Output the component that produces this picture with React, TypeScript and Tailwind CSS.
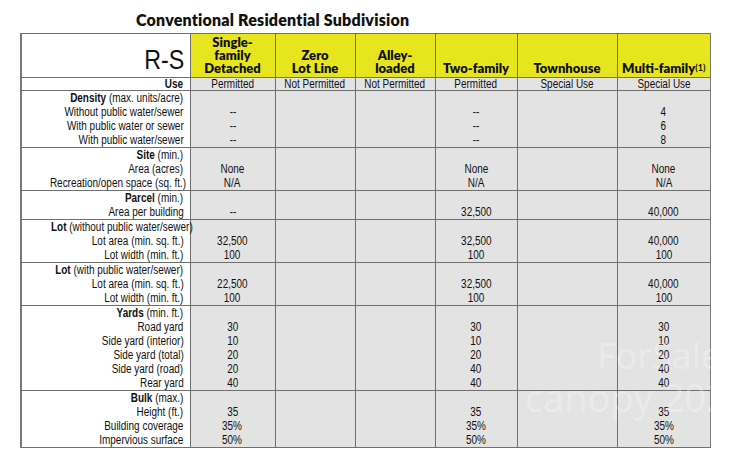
import React from "react";

type Line = { b?: string; t?: string };
type Section = { h: string; label: Line[]; cols: string[][] };

// column order: single, zero, alley, two, town, multi
const sections: Section[] = [
  {
    h: "h-[56px]",
    label: [
      { b: "Density", t: " (max. units/acre)" },
      { t: "Without public water/sewer" },
      { t: "With public water or sewer" },
      { t: "With public water/sewer" },
    ],
    cols: [["", "--", "--", "--"], [], [], ["", "--", "--", "--"], [], ["", "4", "6", "8"]],
  },
  {
    h: "h-[43px]",
    label: [{ b: "Site", t: " (min.)" }, { t: "Area (acres)" }, { t: "Recreation/open space (sq. ft.)" }],
    cols: [["", "None", "N/A"], [], [], ["", "None", "N/A"], [], ["", "None", "N/A"]],
  },
  {
    h: "h-[28px]",
    label: [{ b: "Parcel", t: " (min.)" }, { t: "Area per building" }],
    cols: [["", "--"], [], [], ["", "32,500"], [], ["", "40,000"]],
  },
  {
    h: "h-[43px]",
    label: [
      { b: "Lot", t: " (without public water/sewer)" },
      { t: "Lot area (min. sq. ft.)" },
      { t: "Lot width (min. ft.)" },
    ],
    cols: [["", "32,500", "100"], [], [], ["", "32,500", "100"], [], ["", "40,000", "100"]],
  },
  {
    h: "h-[42px]",
    label: [
      { b: "Lot", t: " (with public water/sewer)" },
      { t: "Lot area (min. sq. ft.)" },
      { t: "Lot width (min. ft.)" },
    ],
    cols: [["", "22,500", "100"], [], [], ["", "32,500", "100"], [], ["", "40,000", "100"]],
  },
  {
    h: "h-[84px]",
    label: [
      { b: "Yards", t: " (min. ft.)" },
      { t: "Road yard" },
      { t: "Side yard (interior)" },
      { t: "Side yard (total)" },
      { t: "Side yard (road)" },
      { t: "Rear yard" },
    ],
    cols: [
      ["", "30", "10", "20", "20", "40"],
      [],
      [],
      ["", "30", "10", "20", "40", "40"],
      [],
      ["", "30", "10", "20", "40", "40"],
    ],
  },
  {
    h: "h-[55px]",
    label: [
      { b: "Bulk", t: " (max.)" },
      { t: "Height (ft.)" },
      { t: "Building coverage" },
      { t: "Impervious surface" },
    ],
    cols: [["", "35", "35%", "50%"], [], [], ["", "35", "35%", "50%"], [], ["", "35", "35%", "50%"]],
  },
];

const gill = "font-['Lato','Open_Sans',sans-serif]";
const cell = "border border-[#6f6f6f] p-0";

// Arial Narrow look: Liberation Sans squeezed horizontally
function Narrow({ children, right }: { children: React.ReactNode; right?: boolean }) {
  return (
    <span className={`inline-block whitespace-nowrap scale-x-[0.83] ${right ? "origin-right" : "origin-center"}`}>
      {children}
    </span>
  );
}

const headers = [
  ["Single-", "family", "Detached"],
  ["Zero", "Lot Line"],
  ["Alley-", "loaded"],
  ["Two-family"],
  ["Townhouse"],
];

export default function App() {
  return (
    <div className="w-[742px] h-[452px] bg-white text-[#111] overflow-hidden">
      <div className={`${gill} h-[33px] pl-[136px] pt-[11px] text-[16px] font-extrabold leading-[18px] tracking-[0.2px]`}>
        Conventional Residential Subdivision
      </div>
      <div className="relative ml-[19px] w-[692px] overflow-hidden">
        <table className="font-['Liberation_Sans',Arial,sans-serif] ml-[1px] w-[690px] table-fixed border-collapse border-x-2 border-x-[#7a7a7a] text-[12px]">
          <colgroup>
            <col className="w-[169px]" />
            <col className="w-[85px]" />
            <col className="w-[80px]" />
            <col className="w-[80px]" />
            <col className="w-[82px]" />
            <col className="w-[100px]" />
            <col className="w-[94px]" />
          </colgroup>
          <tbody>
            <tr className="h-[44px]">
              <td className={`${cell} bg-white text-right align-bottom pr-[5px] pb-[3px] text-[28px] leading-[28px]`}>
                <Narrow right>R-S</Narrow>
              </td>
              {headers.map((l, i) => (
                <td key={i} className={`${cell} ${gill} bg-[#e7e61e] text-center align-bottom pb-[2px] font-extrabold text-[13px] leading-[13px]`}>
                  {l.map((s) => (
                    <div key={s}>{s}</div>
                  ))}
                </td>
              ))}
              <td className={`${cell} ${gill} bg-[#e7e61e] text-center align-bottom pb-[2px] font-extrabold text-[13px] leading-[13px] whitespace-nowrap`}>
                Multi-family<sup className="text-[9px] font-bold relative -top-[2px]">(1)</sup>
              </td>
            </tr>
            <tr className="h-[13px] leading-[12px]">
              <td className={`${cell} bg-white text-right pr-[6px] font-bold`}>
                <Narrow right>Use</Narrow>
              </td>
              {["Permitted", "Not Permitted", "Not Permitted", "Permitted", "Special Use", "Special Use"].map((s, i) => (
                <td key={i} className={`${cell} bg-[#e3e3e3] text-center`}>
                  <Narrow>{s}</Narrow>
                </td>
              ))}
            </tr>
            {sections.map((sec, si) => (
              <tr key={si} className={sec.h}>
                <td className={`${cell} bg-white text-right align-top pr-[6px]`}>
                  {sec.label.map((l, j) => (
                    <div key={j} className="h-[14px] leading-[14px]">
                      <Narrow right>
                        {l.b && <span className="font-bold">{l.b}</span>}
                        {l.t}
                      </Narrow>
                    </div>
                  ))}
                </td>
                {sec.cols.map((c, ci) => (
                  <td key={ci} className={`${cell} bg-[#e3e3e3] text-center align-top`}>
                    {c.map((v, k) => (
                      <div key={k} className="h-[14px] leading-[14px]">
                        <Narrow>{v}</Narrow>
                      </div>
                    ))}
                  </td>
                ))}
              </tr>
            ))}
          </tbody>
        </table>
        {/* watermark */}
        <div className="absolute left-[578px] top-[303px] font-['Open_Sans',sans-serif] text-[36px] leading-[40px] text-white/30 whitespace-nowrap pointer-events-none">
          ForSale
        </div>
        <div className="absolute left-[506px] top-[344px] font-['Open_Sans',sans-serif] text-[38px] leading-[40px] text-white/30 whitespace-nowrap pointer-events-none">
          canopy 2024
        </div>
      </div>
    </div>
  );
}
